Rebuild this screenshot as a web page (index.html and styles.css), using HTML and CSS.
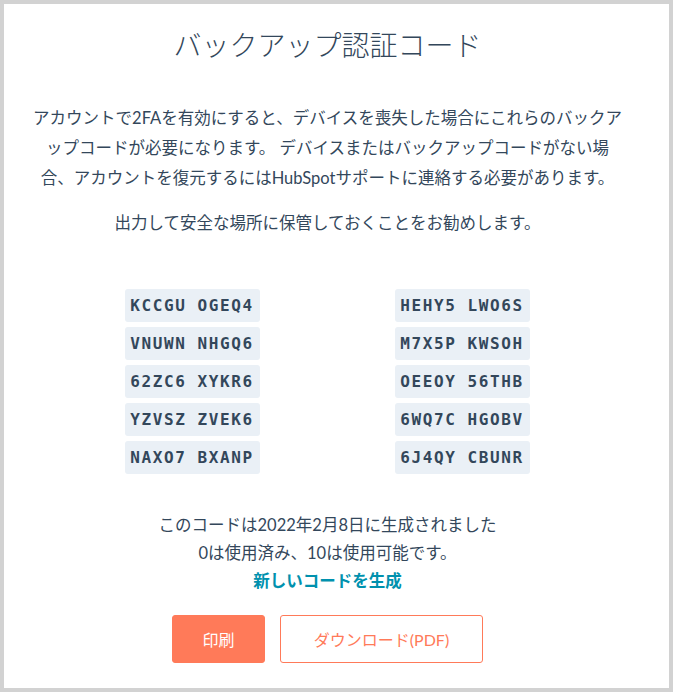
FILE: index.html
```html
<!DOCTYPE html>
<html lang="ja">
<head>
    <meta charset="UTF-8">
    <meta name="viewport" content="width=device-width, initial-scale=1.0">
    <title>バックアップ認証コード</title>
    <link rel="stylesheet" href="styles.css">
</head>
<body>
    <div class="modal">
        <div class="content">
            <h1 class="title">バックアップ認証コード</h1>
            <p class="intro">アカウントで2FAを有効にすると、デバイスを喪失した場合にこれらのバックアップコードが必要になります。 デバイスまたはバックアップコードがない場<br>合、アカウントを復元するにはHubSpotサポートに連絡する必要があります。</p>
            <p class="hint">出力して安全な場所に保管しておくことをお勧めします。</p>

            <div class="codes">
                <span class="code">KCCGU OGEQ4</span>
                <span class="code">VNUWN NHGQ6</span>
                <span class="code">62ZC6 XYKR6</span>
                <span class="code">YZVSZ ZVEK6</span>
                <span class="code">NAXO7 BXANP</span>
                <span class="code">HEHY5 LWO6S</span>
                <span class="code">M7X5P KWSOH</span>
                <span class="code">OEEOY 56THB</span>
                <span class="code">6WQ7C HGOBV</span>
                <span class="code">6J4QY CBUNR</span>
            </div>

            <div class="status">
                <div>このコードは2022年2月8日に生成されました</div>
                <div>0は使用済み、10は使用可能です。</div>
                <a href="#" class="regen">新しいコードを生成</a>
            </div>

            <div class="actions">
                <button class="btn btn-primary">印刷</button>
                <button class="btn btn-secondary">ダウンロード(PDF)</button>
            </div>
        </div>
    </div>
</body>
</html>
```

FILE: styles.css
```css
body {
    margin: 0;
    padding: 4px;
    background: #d2d2d2;
    font-family: Lato, "Noto Sans CJK JP", sans-serif;
    color: #33475b;
}
.modal {
    background: white;
    height: 684px;
    box-sizing: border-box;
}
.content {
    padding: 23px 18px 0 0;
    text-align: center;
}
.title {
    margin: 0 0 40px;
    font-size: 28px;
    line-height: 36px;
    font-weight: 300;
}
.intro {
    width: 598px;
    margin: 0 auto;
    font-size: 16.5px;
    line-height: 30px;
}
.hint {
    margin: 15px 0 0;
    font-size: 16.5px;
    line-height: 30px;
}
.codes {
    width: 540px;
    margin: 51px auto 0;
    display: grid;
    grid-template-columns: 270px 270px;
    grid-template-rows: repeat(5, 33px);
    grid-auto-flow: column;
    row-gap: 5px;
    justify-items: center;
}
.code {
    background: #eaf0f6;
    border-radius: 3px;
    padding: 0 6px 0 5px;
    line-height: 33px;
    font-family: "DejaVu Sans Mono", monospace;
    font-size: 16px;
    font-weight: bold;
    letter-spacing: 1.6px;
    white-space: pre;
}
.status {
    margin-top: 37px;
    font-size: 16.5px;
    line-height: 28px;
}
.regen {
    color: #0091ae;
    font-weight: bold;
    text-decoration: none;
}
.actions {
    margin-top: 20px;
    display: flex;
    justify-content: center;
    gap: 15px;
}
.btn {
    height: 48px;
    padding: 0;
    border-radius: 3px;
    font-family: Lato, "Noto Sans CJK JP", sans-serif;
    font-size: 16px;
    cursor: pointer;
}
.btn-primary {
    width: 93px;
    background: #ff7a59;
    border: 1px solid #ff7a59;
    color: white;
}
.btn-secondary {
    width: 203px;
    background: white;
    border: 1px solid #ff7a59;
    color: #ff7a59;
}
```
